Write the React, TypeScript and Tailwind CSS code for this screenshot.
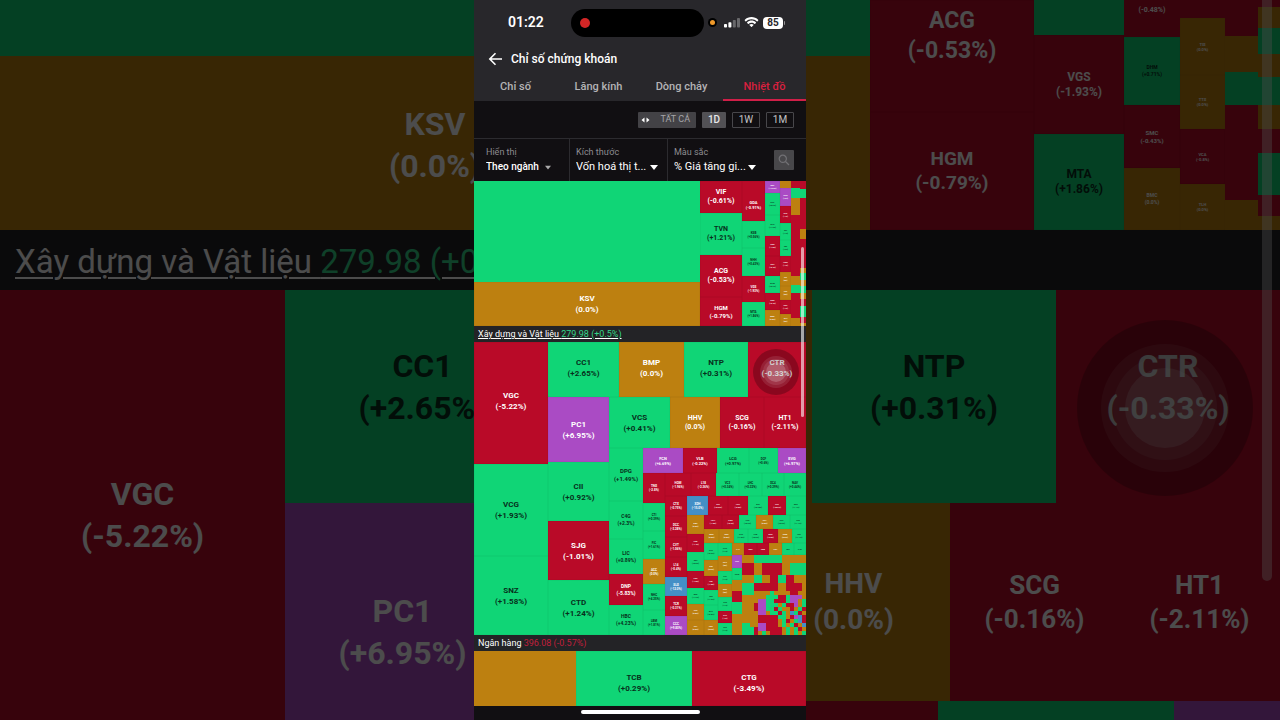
import React from "react";

type Tone = "g" | "r" | "o" | "p" | "b";
type Leaf = { tone: Tone; size: number; name?: string; pct?: string; font: number; extra?: string };
type Branch = { dir: "row" | "col"; size: number; kids: Node[] };
type Node = Leaf | Branch;

const TONES: Record<Tone, string> = {
  g: "bg-[#10d576] text-[#07301c]",
  r: "bg-[#b90a28] text-white",
  o: "bg-[#bd8010] text-white",
  p: "bg-[#aa4bc4] text-white",
  b: "bg-[#448fc6] text-white",
};

const FONTS: Record<number, string> = {
  2: "text-[2px] leading-[3px]",
  3: "text-[3px] leading-[4px]",
  4: "text-[4px] leading-[5px]",
  5: "text-[5px] leading-[7px]",
  6: "text-[6px] leading-[8px]",
  7: "text-[7px] leading-[9px]",
  8: "text-[8px] leading-[11px]",
  12: "text-[12px] leading-[15px]",
  19: "text-[19px] leading-6",
  23: "text-[23px] leading-[30px]",
  26: "text-[26px] leading-[34px]",
  28: "text-[28px] leading-9",
  32: "text-[32px] leading-[42px]",
};

const leaf = (tone: Tone, size: number, font = 2, name?: string, pct?: string, extra?: string): Leaf => ({ tone, size, font, name, pct, extra });
const row = (size: number, ...kids: Node[]): Branch => ({ dir: "row", size, kids });
const col = (size: number, ...kids: Node[]): Branch => ({ dir: "col", size, kids });

function Treemap({ node }: { node: Node }) {
  const grow = { flexGrow: node.size };
  if ("kids" in node) {
    return (
      <div className={`flex min-h-0 min-w-0 basis-0 ${node.dir === "row" ? "flex-row" : "flex-col"}`} style={grow}>
        {node.kids.map((kid, i) => (
          <Treemap key={i} node={kid} />
        ))}
      </div>
    );
  }
  return (
    <div
      className={`flex min-h-0 min-w-0 basis-0 flex-col items-center justify-center overflow-hidden whitespace-nowrap font-bold ${node.name ? "shadow-[inset_0_0_1px_rgba(0,0,0,0.3)]" : ""} ${TONES[node.tone]} ${FONTS[node.font]}`}
      style={grow}
    >
      {(node.name || node.pct) && (
        <div className={`flex flex-col items-center ${node.extra ?? ""}`}>
          {node.name && <span>{node.name}</span>}
          {node.pct && <span>({node.pct})</span>}
        </div>
      )}
    </div>
  );
}

const resources = row(
  1,
  col(226, leaf("g", 101), leaf("o", 44, 8, "KSV", "0.0%")),
  col(42, leaf("r", 32, 7, "VIF", "-0.61%"), leaf("g", 42, 7, "TVN", "+1.21%"), leaf("r", 42, 7, "ACG", "-0.53%"), leaf("r", 29, 6, "HGM", "-0.79%")),
  col(23, leaf("r", 40, 4, "GDA", "-0.91%", "pt-2"), leaf("g", 27, 3, "KSB", "+0.56%"), leaf("g", 28, 3, "NHH", "+0.43%"), leaf("r", 26, 3, "VGS", "-1.93%"), leaf("g", 24, 3, "MTA", "+1.86%")),
  col(15, leaf("p", 12, 2, "BKC", "+10.0%"), leaf("g", 22, 2, "KSV", "+0.6%"), leaf("g", 21, 2, "DHC", "+1.3%"), leaf("r", 20, 2, "TMG", "-1.5%"), leaf("r", 20, 2, "NSH", "-0.4%"), leaf("g", 17, 2, "DHM", "+0.7%"), leaf("r", 17, 2, "SMC", "-0.4%"), leaf("o", 16, 2, "BMC", "0.0%")),
  col(11, leaf("o", 7), leaf("p", 18, 2, "KCB", "+9%"), leaf("r", 17, 2, "VPG", "-1%"), leaf("g", 17, 2, "TNI", "+1%"), leaf("g", 16, 2, "CBI", "+2%"), leaf("r", 16, 2, "HMC", "-1%"), leaf("o", 14, 2, "TIS", "0%"), leaf("o", 14, 2, "TTS", "0%"), leaf("r", 14, 2, "VCA", "-1%"), leaf("o", 12, 2, "TLH", "0%")),
  col(9, leaf("r", 7), leaf("g", 10), leaf("o", 17), leaf("r", 24), leaf("r", 20), leaf("r", 17), leaf("o", 9), leaf("g", 8), leaf("r", 25), leaf("o", 8)),
  col(6, leaf("r", 8), leaf("g", 9), leaf("r", 16), leaf("r", 15), leaf("o", 10), leaf("r", 30), leaf("o", 5), leaf("g", 7), leaf("o", 6), leaf("g", 7), leaf("o", 6), leaf("r", 7), leaf("g", 11), leaf("r", 6), leaf("o", 3)),
);

const MOSAIC = [
  "ooogggggggoooooo",
  "ooogggggggoooooo",
  "rrroorrrrroogggg",
  "rrroorrrrroogggg",
  "rrroorrrrroogggg",
  "oooggoorrggrrooo",
  "oooggoorrggrrooo",
  "gggrrrrrroorrrro",
  "gggrrrrrroorrrro",
  "gggoooogoooorroo",
  "oooooogggrrgpppo",
  "ooooppggrrrgppog",
  "ooorppgggogrrpog",
  "ooorppggrgoorogr",
  "ooooppoggrgobgro",
  "oooorrrrrggorpbr",
  "oooorrrrrogrogbr",
  "ggoopprrrogogrob",
  "gggrpprrrrogogro",
  "gggrogorrrogogog",
];

const mosaic = col(
  64,
  ...MOSAIC.map((line) => row(4, ...(line.match(/(.)\1*/g) ?? []).map((run) => leaf(run[0] as Tone, run.length)))),
);

const tail = row(
  92,
  col(14, leaf("g", 17, 2, "VC7", "+0.9%"), leaf("o", 16, 2, "S99", "0.0%"), leaf("r", 14, 2, "HID", "-1.0%"), leaf("g", 15, 2, "VE9", "+1.6%"), leaf("g", 15, 2, "DC4", "+0.8%"), leaf("o", 15, 2, "PXS", "0.0%")),
  col(14, leaf("g", 13, 2, "PHC", "+1%"), leaf("o", 15, 2, "CVT", "0%"), leaf("g", 13, 2, "TTL", "+1%"), leaf("o", 13, 2, "MST", "0%"), leaf("g", 14, 2, "SC5", "+1%"), leaf("r", 12, 2, "C47", "-1%"), leaf("g", 12, 2, "VC2", "+1%")),
  col(
    74,
    row(12, leaf("o", 12, 2, "L14"), leaf("r", 13, 2, "UDC"), leaf("r", 12, 2, "LM8"), leaf("o", 13, 2, "HU1"), leaf("g", 12, 2, "SDT"), leaf("g", 12, 2, "PTC")),
    row(80, col(10, leaf("p", 13, 2, "C92"), leaf("g", 12, 2, "VCM"), leaf("o", 11), leaf("r", 11), leaf("g", 12), leaf("o", 11), leaf("o", 10)), mosaic),
  ),
);

const construction = row(
  1,
  col(74, leaf("r", 122, 8, "VGC", "-5.22%", "pb-1"), leaf("g", 92, 8, "VCG", "+1.93%"), leaf("g", 79, 8, "SNZ", "+1.58%")),
  col(
    258,
    row(55, leaf("g", 71, 8, "CC1", "+2.65%", "pb-1"), leaf("o", 65, 8, "BMP", "0.0%", "pb-1"), leaf("g", 64, 8, "NTP", "+0.31%", "pb-1"), leaf("r", 58, 8, "CTR", "-0.33%", "pb-1")),
    row(
      238,
      col(61, leaf("p", 65, 8, "PC1", "+6.95%"), leaf("g", 59, 8, "CII", "+0.92%"), leaf("r", 59, 8, "SJG", "-1.01%"), leaf("g", 55, 8, "CTD", "+1.24%")),
      col(
        197,
        row(51, leaf("g", 61, 8, "VCS", "+0.41%"), leaf("o", 50, 7, "HHV", "0.0%"), leaf("r", 44, 7, "SCG", "-0.16%"), leaf("r", 42, 7, "HT1", "-2.11%")),
        row(
          187,
          col(34, leaf("g", 53, 6, "DPG", "+1.49%"), leaf("g", 38, 5, "C4G", "+2.3%"), leaf("g", 35, 5, "LIC", "+0.89%"), leaf("r", 31, 5, "DNP", "-5.83%"), leaf("g", 30, 5, "HBC", "+4.23%")),
          col(
            163,
            row(25, leaf("p", 40, 4, "FCN", "+6.69%"), leaf("r", 34, 4, "VLB", "-0.22%"), leaf("g", 32, 4, "LCG", "+0.97%"), leaf("g", 29, 3, "DCF", "+0.6%"), leaf("p", 28, 4, "EVG", "+6.97%")),
            row(
              162,
              col(22, leaf("r", 30, 3, "TNG", "-2.8%"), leaf("g", 28, 3, "CTI", "+0.39%"), leaf("g", 28, 3, "FIC", "+1.61%"), leaf("o", 25, 3, "ACC", "0.0%"), leaf("g", 26, 3, "NHC", "+4.25%"), leaf("g", 25, 3, "LBM", "+1.81%")),
              col(
                141,
                row(23, leaf("r", 26, 3, "HOM", "-1.96%"), leaf("r", 25, 3, "L18", "-2.36%"), leaf("g", 23, 3, "VC3", "+0.34%"), leaf("g", 23, 3, "LHC", "+0.32%"), leaf("g", 22, 3, "DC4", "+0.29%"), leaf("g", 22, 3, "NAV", "+0.44%")),
                row(
                  139,
                  col(22, leaf("r", 20, 3, "CTX", "-0.75%"), leaf("r", 21, 3, "DCC", "-3.28%"), leaf("r", 20, 3, "CVT", "-1.06%"), leaf("r", 20, 3, "L14", "-0.4%"), leaf("b", 19, 3, "SLG", "-12.0%"), leaf("r", 20, 3, "TCR", "-0.31%"), leaf("p", 19, 3, "CCC", "+9.80%")),
                  col(
                    119,
                    row(19, leaf("b", 21, 3, "XDH", "-15.0%"), leaf("r", 20, 2, "VLC", "-0.78%"), leaf("r", 20, 2, "HPP", "-0.8%"), leaf("g", 20, 2, "BTS", "+0.78%"), leaf("r", 18, 2, "PLC", "-3.87%"), leaf("g", 20, 2, "DXV", "+1.1%")),
                    row(
                      120,
                      col(17, leaf("o", 19, 2, "KBT", "0.0%"), leaf("r", 18, 2, "VNE", "-1.4%"), leaf("g", 19, 2, "SD9", "+0.8%"), leaf("r", 17, 2, "HUT", "-1.0%"), leaf("g", 16, 2, "BCE", "+1.2%"), leaf("o", 16, 2, "TV2", "0.0%"), leaf("o", 15, 2, "TV1", "0.0%")),
                      col(
                        102,
                        row(14, leaf("r", 18, 2, "HVH", "-1.0%"), leaf("r", 17, 2, "CMS", "-0.7%"), leaf("g", 17, 2, "PTE", "+0.9%"), leaf("o", 17, 2, "SCJ", "0.0%"), leaf("g", 17, 2, "C32", "+0.5%"), leaf("g", 16, 2, "TLD", "+1.1%")),
                        row(14, leaf("o", 15, 2, "MCG", "0.0%"), leaf("o", 15, 2, "CDC", "0.0%"), leaf("g", 14, 2, "VC9", "+1.0%"), leaf("g", 15, 2, "TTB", "+0.5%"), leaf("r", 15, 2, "BAX", "-2.0%"), leaf("o", 14, 2, "GMX", "0.0%"), leaf("g", 14, 2, "ICN", "+1.1%")),
                        tail,
                      ),
                    ),
                  ),
                ),
              ),
            ),
          ),
        ),
      ),
    ),
  ),
);

const banks = row(1, leaf("o", 102), leaf("g", 116, 8, "TCB", "+0.29%", "pt-2"), leaf("r", 114, 8, "CTG", "-3.49%", "pt-2"));

const sideMetals = row(
  1,
  col(64, leaf("g", 56), leaf("o", 174)),
  col(164, leaf("r", 112, 23, "ACG", "-0.53%", "pb-10"), leaf("r", 118, 19, "HGM", "-0.79%")),
  col(90, leaf("g", 35), leaf("r", 99, 12, "VGS", "-1.93%"), leaf("g", 96, 12, "MTA", "+1.86%")),
  col(56, leaf("r", 37, 7, undefined, "-0.48%", "pb-4"), leaf("g", 68, 5, "DHM", "+0.71%"), leaf("r", 63, 6, "SMC", "-0.43%"), leaf("o", 62, 5, "BMC", "0.0%")),
  col(45, leaf("r", 18), leaf("o", 57, 4, "TIS", "0.0%"), leaf("o", 54, 4, "TTS", "0.0%"), leaf("r", 55, 4, "VCA", "-0.8%"), leaf("o", 46, 4, "TLH", "0.0%")),
  col(33, leaf("r", 36), leaf("o", 36), leaf("g", 33), leaf("r", 95), leaf("o", 30)),
  col(22, leaf("r", 7), leaf("o", 21), leaf("g", 26), leaf("o", 23), leaf("g", 28), leaf("o", 24), leaf("r", 24), leaf("g", 42), leaf("r", 21), leaf("o", 14)),
);

function Block({ tone, className, name, pct, font = 32 }: { tone: Tone; className: string; name?: string; pct?: string; font?: number }) {
  return (
    <div className={`flex shrink-0 flex-col items-center justify-center font-bold ${TONES[tone]} ${FONTS[font]} ${className}`}>
      {name && <span>{name}</span>}
      {pct && <span>({pct})</span>}
    </div>
  );
}

function TouchDot({ large }: { large?: boolean }) {
  return (
    <div className={`flex items-center justify-center rounded-full bg-black/25 ${large ? "size-44" : "size-[46px]"}`}>
      <div className={`flex items-center justify-center rounded-full bg-white/10 ${large ? "size-32" : "size-8"}`}>
        <div className={`flex items-center justify-center rounded-full bg-white/10 ${large ? "size-26" : "size-[26px]"}`}>
          <div className={`rounded-full bg-white/20 ${large ? "size-20" : "size-5"}`} />
        </div>
      </div>
    </div>
  );
}

function LeftBackdrop() {
  return (
    <div className="relative min-w-0 flex-1 overflow-hidden" aria-hidden="true">
      <Block tone="g" className="h-14 w-[870px]" />
      <Block tone="o" className="h-[174px] w-[870px] pt-1" name="KSV" pct="0.0%" />
      <div className="flex h-[60px] items-center whitespace-nowrap bg-[#232326] px-[15px] pt-1 text-[33px] text-white">
        <p className="underline decoration-2 underline-offset-4">
          Xây dựng và Vật liệu <span className="text-[#35d68a]">279.98 (+0.5%)</span>
        </p>
      </div>
      <div className="flex">
        <Block tone="r" className="h-[470px] w-[285px] pb-5" name="VGC" pct="-5.22%" />
        <div>
          <Block tone="g" className="h-[213px] w-[275px] pb-5" name="CC1" pct="+2.65%" />
          <Block tone="p" className="h-[257px] w-[235px]" name="PC1" pct="+6.95%" />
        </div>
      </div>
      <div className="absolute inset-0 bg-black/70" />
    </div>
  );
}

function RightBackdrop() {
  return (
    <div className="relative min-w-0 flex-1 overflow-hidden" aria-hidden="true">
      <div className="flex h-[230px]">
        <Treemap node={sideMetals} />
      </div>
      <div className="h-[60px] bg-[#232326]" />
      <div className="flex h-[213px] justify-end">
        <Block tone="o" className="w-2" />
        <Block tone="g" className="w-[244px] pb-5" name="NTP" pct="+0.31%" />
        <Block tone="r" className="w-[224px] pb-5" name="CTR" pct="-0.33%" />
      </div>
      <div className="flex h-[198px] justify-end">
        <Block tone="o" className="w-[193px]" name="HHV" pct="0.0%" font={28} />
        <Block tone="r" className="w-[169px]" name="SCG" pct="-0.16%" font={26} />
        <Block tone="r" className="w-[161px]" name="HT1" pct="-2.11%" font={26} />
      </div>
      <div className="flex h-6 justify-end">
        <Block tone="r" className="w-[132px]" />
        <Block tone="g" className="w-[126px]" />
        <Block tone="g" className="w-[110px]" />
        <Block tone="p" className="w-[106px]" />
      </div>
      <div className="absolute right-[27px] top-80">
        <TouchDot large />
      </div>
      <div className="absolute right-2 top-0 h-[581px] w-[10px] rounded-b-full bg-white/40" />
      <div className="absolute inset-0 bg-black/70" />
    </div>
  );
}

function StatusBar() {
  return (
    <div className="flex h-[45px] items-center text-white">
      <time className="w-[97px] pl-[34px] text-[14px] font-semibold">01:22</time>
      <div className="flex h-7 w-[133px] items-center rounded-full bg-black pl-[9px]">
        <span className="size-[10px] rounded-full bg-[#d32626]" />
      </div>
      <span className="ml-1 flex size-[9px] items-center justify-center rounded-full bg-black">
        <span className="size-[5px] rounded-full bg-[#f0992a]" />
      </span>
      <svg className="ml-[7px]" width="16" height="10" viewBox="0 0 16 10" fill="#fff" aria-hidden="true">
        <rect x="0" y="6" width="3" height="3.5" rx="0.8" />
        <rect x="4.4" y="4.2" width="3" height="5.3" rx="0.8" />
        <rect x="8.8" y="2" width="3" height="7.5" rx="0.8" opacity="0.3" />
        <rect x="13" y="0" width="3" height="9.5" rx="0.8" opacity="0.3" />
      </svg>
      <svg className="ml-1" width="15" height="11" viewBox="0 0 16 12" fill="#fff" aria-hidden="true">
        <path d="M8 2.4c2.3 0 4.4.9 6 2.4.1.1.3.1.4 0l1.1-1.2c.1-.1.1-.3 0-.4C11.3-.9 4.7-.9.5 3.2c-.1.1-.1.3 0 .4l1.1 1.2c.1.1.3.1.4 0 1.6-1.5 3.7-2.4 6-2.4z" />
        <path d="M8 6.2c1.3 0 2.5.5 3.4 1.3.1.1.3.1.4 0l1.2-1.2c.1-.1.1-.3 0-.4-2.8-2.6-7.1-2.6-9.9 0-.1.1-.1.3 0 .4l1.2 1.2c.1.1.3.1.4 0 .9-.8 2.1-1.3 3.3-1.3z" />
        <path d="M10.3 8.8c.1-.1.1-.3 0-.4-1.3-1.2-3.3-1.2-4.6 0-.1.1-.1.3 0 .4l2.1 2.1c.1.1.3.1.4 0l2.1-2.1z" />
      </svg>
      <span className="ml-1 flex h-3 w-5 items-center justify-center rounded-[4px] bg-white text-[10px] font-bold text-[#28272b]">85</span>
      <span className="ml-px h-1 w-px rounded-r-full bg-white/50" />
    </div>
  );
}

function Filter({ id, label, value, className, muted }: { id: string; label: string; value: string; className: string; muted?: boolean }) {
  return (
    <div className={`flex flex-col justify-center whitespace-nowrap ${className}`}>
      <label htmlFor={id} className="text-[9px] leading-[14px] text-[#8d8c90]">
        {label}
      </label>
      <div className="flex items-center">
        <select
          id={id}
          className={`appearance-none bg-transparent leading-4 text-white outline-none ${muted ? "w-[59px] text-[10px] font-medium" : "w-[74px] text-[11px]"}`}
        >
          <option>{value}</option>
        </select>
        <svg width={muted ? 6 : 8} height="5" viewBox="0 0 8 5" fill={muted ? "#aaa" : "#fff"} aria-hidden="true">
          <path d="M0 0h8L4 5z" />
        </svg>
      </div>
    </div>
  );
}

const TABS = ["Chỉ số", "Lăng kính", "Dòng chảy", "Nhiệt đồ"];

function SectionTitle({ name, value, tone, linked }: { name: string; value: string; tone: string; linked?: boolean }) {
  return (
    <h2 className="flex h-4 items-center bg-[#232326] px-1 text-[9px] leading-4 text-white">
      <a href="#" className={linked ? "underline" : ""}>
        {name} <span className={tone}>{value}</span>
      </a>
    </h2>
  );
}

function Phone() {
  return (
    <main className="relative flex w-[332px] shrink-0 flex-col bg-[#110f12]">
      <header className="bg-[#28272b]">
        <StatusBar />
        <div className="flex h-7 items-center gap-2 pl-[14px] text-white">
          <button type="button" aria-label="Quay lại">
            <svg width="15" height="14" viewBox="0 0 15 14" fill="none" stroke="#fff" strokeWidth="1.6" aria-hidden="true">
              <path d="M14 7H2M7.5 1.3 1.8 7l5.7 5.7" />
            </svg>
          </button>
          <h1 className="text-[12px] font-medium">Chỉ số chứng khoán</h1>
        </div>
        <nav className="grid h-7 grid-cols-4 text-center text-[11px] font-medium">
          {TABS.map((tab) => (
            <a
              key={tab}
              href="#"
              className={`leading-7 ${tab === "Nhiệt đồ" ? "text-[#d9203f] shadow-[inset_0_-2px_0_#d01f48]" : "text-[#b4b3b6]"}`}
            >
              {tab}
            </a>
          ))}
        </nav>
      </header>

      <div className="flex h-[37px] items-center justify-end gap-[6px] pr-3 text-[10px] text-[#c4c4c6]">
        <button type="button" className="flex h-4 w-[58px] items-center justify-between rounded-[1px] bg-[#434246] pl-[3px] pr-[6px] text-[9px] text-[#a5a4a8]">
          <svg width="9" height="6" viewBox="0 0 9 6" fill="#fff" aria-hidden="true">
            <path d="M3.5.5v5L.5 3zM5.5.5v5l3-2.5z" />
          </svg>
          TẤT CẢ
        </button>
        <button type="button" className="h-4 w-6 rounded-[1px] bg-[#525155] font-medium leading-4 text-[#e6e6e8]">1D</button>
        <button type="button" className="h-4 w-7 rounded-[1px] border border-[#48474b] leading-[14px]">1W</button>
        <button type="button" className="h-4 w-7 rounded-[1px] border border-[#48474b] leading-[14px]">1M</button>
      </div>

      <div className="flex h-[43px] border-t border-[#2c2b2f]">
        <Filter id="group" label="Hiển thị" value="Theo ngành" className="w-24 border-r border-[#2c2b2f] pl-3" muted />
        <Filter id="size" label="Kích thước" value="Vốn hoá thị t..." className="w-[98px] border-r border-[#2c2b2f] pl-[6px]" />
        <Filter id="color" label="Màu sắc" value="% Giá tăng gi..." className="flex-1 pl-[6px]" />
        <button type="button" aria-label="Tìm kiếm" className="mr-3 flex size-5 items-center justify-center self-center rounded-[1px] bg-[#48474a]">
          <svg width="12" height="12" viewBox="0 0 12 12" fill="none" stroke="#717074" strokeWidth="1.2" aria-hidden="true">
            <circle cx="4.8" cy="4.8" r="3.6" />
            <path d="m7.5 7.5 3.5 3.5" />
          </svg>
        </button>
      </div>

      <section className="flex h-[145px]">
        <Treemap node={resources} />
      </section>
      <SectionTitle name="Xây dựng và Vật liệu" value="279.98 (+0.5%)" tone="text-[#35d68a]" linked />
      <section className="relative flex h-[293px]">
        <Treemap node={construction} />
        <div className="absolute right-[7px] top-[7px]">
          <TouchDot />
        </div>
      </section>
      <SectionTitle name="Ngân hàng" value="396.08 (-0.57%)" tone="text-[#c01f3c]" />
      <section className="flex h-[55px]">
        <Treemap node={banks} />
      </section>
      <footer className="flex h-3 items-center justify-center">
        <span className="h-1 w-[119px] rounded-full bg-white" />
      </footer>
      <div className="absolute right-[2px] top-[247px] h-[170px] w-[3px] rounded-full bg-white/60" />
    </main>
  );
}

export default function App() {
  return (
    <div className="flex h-screen overflow-hidden bg-black font-[Roboto,sans-serif]">
      <LeftBackdrop />
      <Phone />
      <RightBackdrop />
    </div>
  );
}
